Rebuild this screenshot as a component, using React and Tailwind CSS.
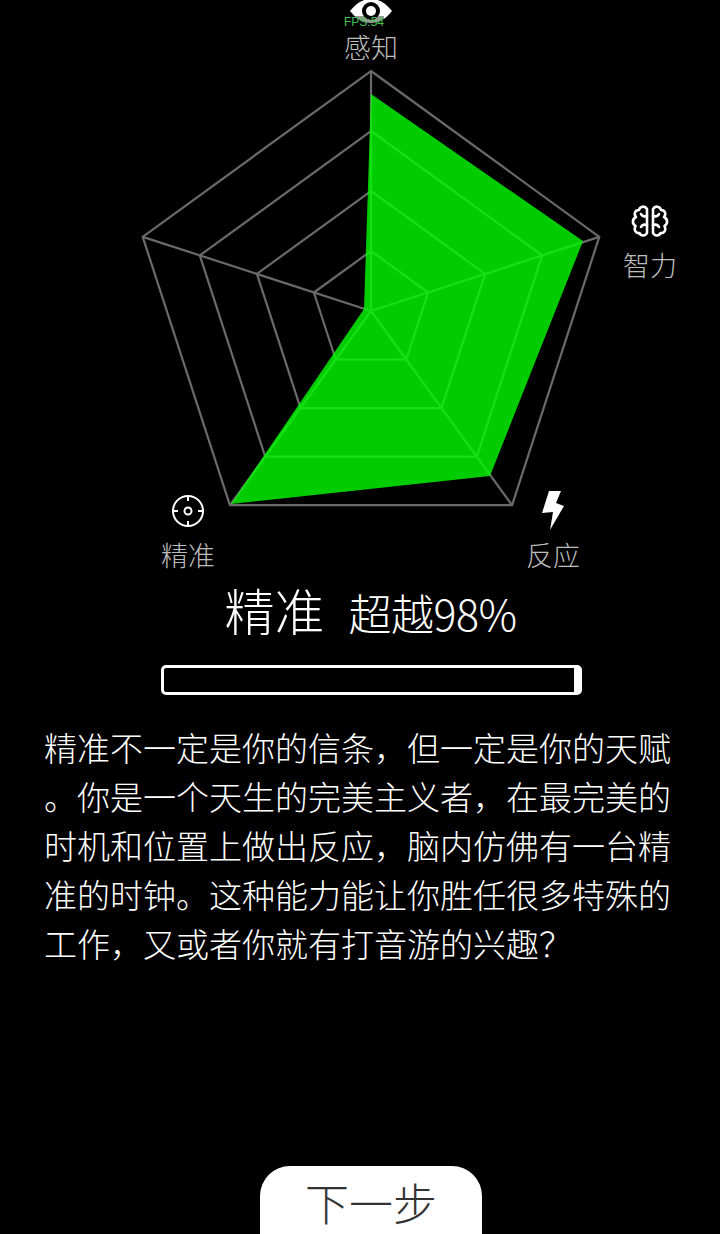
const cx = 371
const cy = 311
const R = 240
const angles = [-90, -18, 54, 126, 198]

function ringPoints(r) {
  return angles
    .map(a => `${(cx + r * Math.cos((a * Math.PI) / 180)).toFixed(1)},${(cy + r * Math.sin((a * Math.PI) / 180)).toFixed(1)}`)
    .join(' ')
}

function Radar() {
  return (
    <svg width="720" height="520" viewBox="0 0 720 520" className="block">
      {[1, 0.75, 0.5, 0.25].map(k => (
        <polygon key={k} points={ringPoints(R * k)} fill="none" stroke="#6a6a6a" strokeWidth="2.2" />
      ))}
      {angles.map(a => (
        <line
          key={a}
          x1={cx}
          y1={cy}
          x2={cx + R * Math.cos((a * Math.PI) / 180)}
          y2={cy + R * Math.sin((a * Math.PI) / 180)}
          stroke="#6a6a6a"
          strokeWidth="2.2"
        />
      ))}
      <polygon points="371,94 583,241 490,476 231,504 364,309" fill="#00ff00" fillOpacity="0.8" />
    </svg>
  )
}

function EyeIcon() {
  return (
    <svg width="44" height="26" viewBox="0 0 44 26">
      <path d="M1 13 C8 4 15 1 22 1 C29 1 36 4 43 13 C36 22 29 25 22 25 C15 25 8 22 1 13 Z" fill="#fff" />
      <circle cx="22" cy="13" r="9" fill="#000" />
      <circle cx="22" cy="13" r="5" fill="#fff" />
    </svg>
  )
}

function BrainIcon() {
  const lobe = 'M16 4 C14 0.5 9 1 8 5 C4 5 2.5 9 5 12 C1 14 1 19 4.5 21 C2.5 25 5 29 8.5 28 C10 31.5 14.5 31 16 28 Z'
  return (
    <svg width="38" height="32" viewBox="0 0 38 32" fill="none" stroke="#fff" strokeWidth="2.6" strokeLinejoin="round" strokeLinecap="round">
      <path d={lobe} />
      <path d="M16 11 C13 12 11 11 10 9 M16 20 C13 19 11 20 10 22" />
      <g transform="matrix(-1 0 0 1 38 0)">
        <path d={lobe} />
        <path d="M16 11 C13 12 11 11 10 9 M16 20 C13 19 11 20 10 22" />
      </g>
    </svg>
  )
}

function BoltIcon() {
  return (
    <svg width="24" height="40" viewBox="0 0 24 40">
      <polygon points="8,0 20,0 15,12 23,15 9,39 12,21 1,22" fill="#fff" />
    </svg>
  )
}

function TargetIcon() {
  return (
    <svg width="34" height="34" viewBox="0 0 34 34" fill="none" stroke="#fff" strokeWidth="2">
      <circle cx="17" cy="17" r="15" />
      <circle cx="17" cy="17" r="3.5" />
      <path d="M17 2v5M17 27v5M2 17h5M27 17h5" />
    </svg>
  )
}

function Label({ className, textClass = 'mt-[8px]', icon, text }) {
  return (
    <div className={`absolute flex flex-col items-center w-[80px] ${className}`}>
      <div className="h-[36px] flex items-center justify-center">{icon}</div>
      <span className={`text-[27px] leading-[36px] font-extralight text-[#bdbdbd] ${textClass}`}>{text}</span>
    </div>
  )
}

export default function App() {
  return (
    <div
      className="w-[720px] h-[1234px] bg-black overflow-hidden flex flex-col items-center text-white font-extralight"
      style={{ fontFamily: '"Noto Sans CJK SC", "Noto Sans", sans-serif' }}
    >
      <div className="relative w-[720px] h-[580px] shrink-0">
        <Radar />
        <Label className="left-[331px] top-[-7px]" textClass="mt-0" icon={<EyeIcon />} text="感知" />
        <span className="absolute left-[344px] top-[16px] text-[12px] leading-[13px] text-[#44c050] bg-black/40 font-['Liberation_Sans',sans-serif]">FPS:54</span>
        <Label className="left-[610px] top-[203px]" icon={<BrainIcon />} text="智力" />
        <Label className="left-[513px] top-[493px]" icon={<BoltIcon />} text="反应" />
        <Label className="left-[148px] top-[493px]" icon={<TargetIcon />} text="精准" />
      </div>
      <div className="flex items-baseline justify-center ml-[21px] mt-[-5px] mb-[3px]">
        <span className="text-[50px] leading-[68px] font-light">精准</span>
        <span className="text-[43px] leading-[68px] ml-[24px] tracking-[-0.5px] font-light">超越98%</span>
      </div>
      <div className="w-[421px] h-[30px] mt-[16px] ml-[22px] border-[3px] border-white rounded-[5px] flex justify-end">
        <div className="w-[5px] bg-white" />
      </div>
      <p className="w-[630px] mt-[28px] mr-[2px] text-[33px] leading-[49px] break-all [line-break:anywhere]">
        精准不一定是你的信条，但一定是你的天赋。你是一个天生的完美主义者，在最完美的时机和位置上做出反应，脑内仿佛有一台精准的时钟。这种能力能让你胜任很多特殊的工作，又或者你就有打音游的兴趣？
      </p>
      <button className="mt-auto mb-[-30px] ml-[22px] w-[222px] h-[98px] shrink-0 bg-white rounded-[30px] text-[44px] text-[#333333] font-extralight pb-[26px]">
        下一步
      </button>
    </div>
  )
}
